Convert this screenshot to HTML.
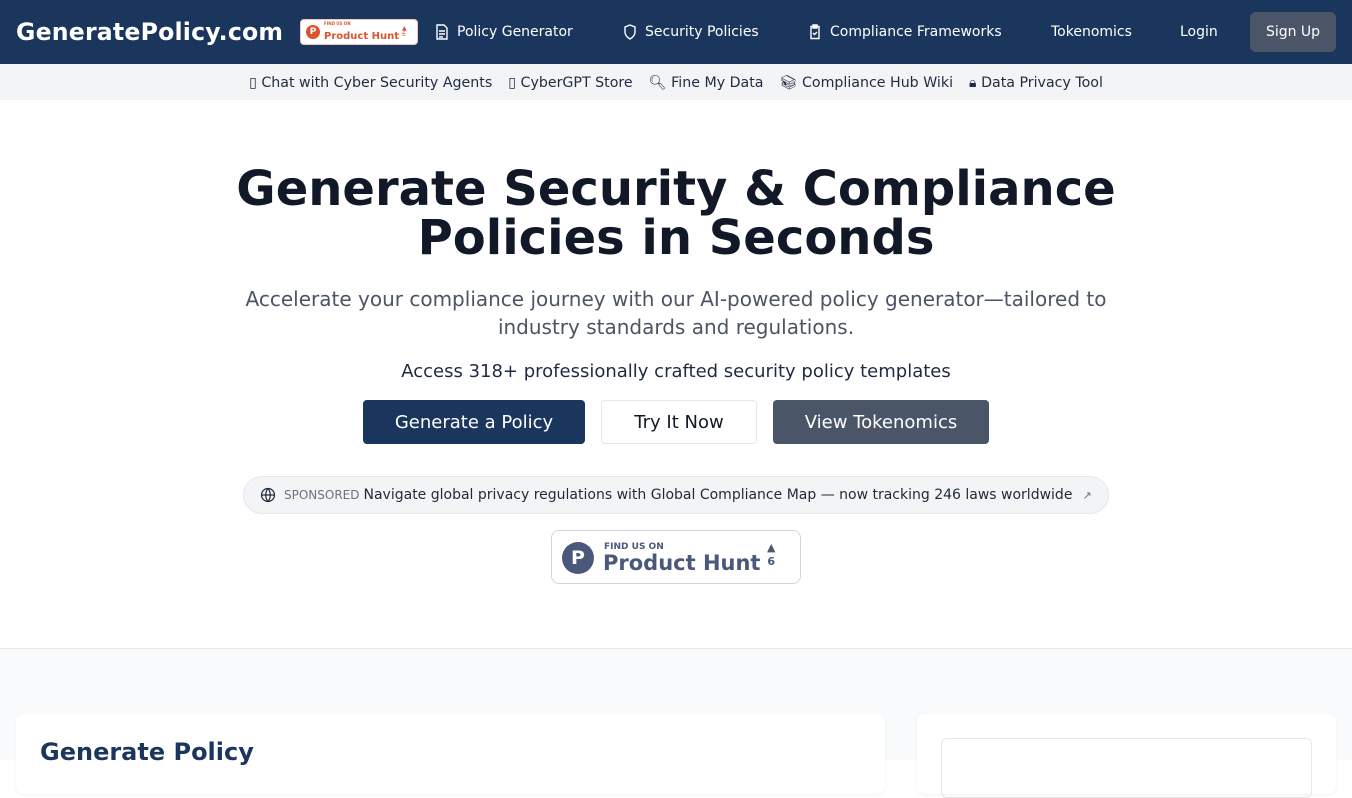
<!DOCTYPE html>
<html><head><meta charset="utf-8"><style>
*{box-sizing:border-box;margin:0;padding:0}
body{width:1352px;height:760px;overflow:hidden;font-family:"DejaVu Sans","Liberation Sans",sans-serif;background:#fff;color:#111827}
.nav{height:64px;background:#1b365d;display:flex;align-items:center;padding:0 16px;color:#fff;position:relative}
.logo{font-weight:bold;font-size:23.6px;letter-spacing:0.2px}
.phs{position:absolute;left:300px;top:19px;width:118px;height:26px;background:#fff;border:1px solid #f2c6bd;border-radius:4px;display:flex;align-items:center;padding-left:5px}
.phs .c{width:14px;height:14px;border-radius:50%;background:#da552f;color:#fff;font-size:9px;font-weight:bold;text-align:center;line-height:14px}
.phs .t{margin-left:4px;color:#da552f;line-height:1}
.phs .t small{display:block;font-size:4px;font-weight:bold}
.phs .t b{font-size:10px}
.ni{position:absolute;top:24px;font-size:14px;color:#fff;display:flex;align-items:center;gap:8px}
.signup{position:absolute;left:1250px;top:12px;width:86px;height:40px;background:#4a5568;border-radius:6px;font-size:14px;display:flex;align-items:center;justify-content:center}
.sub{height:36px;background:#f3f4f6;display:flex;justify-content:center;align-items:center;gap:16px;font-size:14.2px;color:#1f2a44;padding-top:2px}
.sub span{display:flex;align-items:center;gap:4px}
h1{text-align:center;font-size:48px;font-weight:bold;line-height:49px;margin-top:65px;color:#111827}
.lead{text-align:center;font-size:20px;color:#4b5563;line-height:28px;margin:22px auto 0;width:880px}
.acc{text-align:center;font-size:18px;color:#1f2a44;margin-top:20px}
.b{position:absolute;top:400px;height:44px;font-size:18px;display:flex;align-items:center;justify-content:center;border-radius:4px}
.spon{position:absolute;left:243px;top:476px;width:866px;height:38px;border:1px solid #e5e7eb;background:#f3f4f6;border-radius:19px;display:flex;align-items:center;padding-left:16px;font-size:14px;color:#1f2937}
.ph{position:absolute;left:551px;top:530px;width:250px;height:54px;border:1px solid #d1d5db;border-radius:8px;background:#fff}
.sec{position:absolute;top:648px;left:0;width:1352px;height:112px;background:#f8fafc;border-top:1px solid #e5e7eb}
.card{position:absolute;background:#fff;border-radius:8px;box-shadow:0 1px 3px rgba(0,0,0,.06)}
</style></head><body>
<div class="nav">
<div class="logo">GeneratePolicy.com</div>
<div class="phs"><div class="c">P</div><div class="t"><small>FIND US ON</small><b>Product Hunt</b></div><div style="font-size:6px;color:#da552f;margin-left:3px;line-height:6px">▲<br>6</div></div>
<div class="ni" style="left:435px"><svg width="14" height="16" viewBox="0 0 14 16" fill="none" stroke="#fff" stroke-width="1.4"><path d="M2 1h7l3 3v11H2z M4 7h6 M4 10h6 M4 13h4"/></svg>Policy Generator</div>
<div class="ni" style="left:623px"><svg width="14" height="16" viewBox="0 0 14 16" fill="none" stroke="#fff" stroke-width="1.4"><path d="M7 1l5 2v5c0 3-2.5 5.5-5 7-2.5-1.5-5-4-5-7V3z"/></svg>Security Policies</div>
<div class="ni" style="left:808px"><svg width="14" height="16" viewBox="0 0 14 16" fill="none" stroke="#fff" stroke-width="1.4"><path d="M3 2.5h8v12H3z M5 1h4v3H5z M5 9l1.5 1.5L9 8"/></svg>Compliance Frameworks</div>
<div class="ni" style="left:1051px">Tokenomics</div>
<div class="ni" style="left:1180px">Login</div>
<div class="signup">Sign Up</div>
</div>
<div class="sub">
<span>▯ Chat with Cyber Security Agents</span><span>▯ CyberGPT Store</span><span>🔍&#xFE0E; Fine My Data</span><span>📚&#xFE0E; Compliance Hub Wiki</span><span>🔒&#xFE0E; Data Privacy Tool</span>
</div>
<h1>Generate Security &amp; Compliance<br>Policies in Seconds</h1>
<div class="lead">Accelerate your compliance journey with our AI-powered policy generator—tailored to industry standards and regulations.</div>
<div class="acc">Access 318+ professionally crafted security policy templates</div>
<div class="b" style="left:363px;width:222px;background:#1b365d;color:#fff">Generate a Policy</div>
<div class="b" style="left:601px;width:156px;border:1px solid #e5e7eb;color:#111827">Try It Now</div>
<div class="b" style="left:773px;width:216px;background:#4a5568;color:#fff">View Tokenomics</div>
<div class="spon"><svg width="16" height="16" viewBox="0 0 16 16" fill="none" stroke="#1f2937" stroke-width="1.2"><circle cx="8" cy="8" r="6.5"/><path d="M1.5 8h13 M8 1.5c-3 3.5-3 9.5 0 13 M8 1.5c3 3.5 3 9.5 0 13"/></svg><span style="font-size:12px;color:#6b7280;margin:0 4px 0 8px">SPONSORED</span>Navigate global privacy regulations with Global Compliance Map — now tracking 246 laws worldwide<span style="font-size:11px;color:#6b7280;margin-left:10px">↗</span></div>
<div class="ph">
<div style="position:absolute;left:10px;top:11px;width:32px;height:32px;border-radius:50%;background:#4b587c;color:#fff;font-weight:bold;font-size:19px;text-align:center;line-height:32px">P</div>
<div style="position:absolute;left:52px;top:11px;color:#4b587c;font-weight:bold;font-size:9px">FIND US ON</div>
<div style="position:absolute;left:51px;top:20px;color:#4b587c;font-weight:bold;font-size:21px">Product Hunt</div>
<div style="position:absolute;left:215px;top:10px;color:#4b587c;font-size:11px;font-weight:bold;text-align:center;line-height:14px">▲<br>6</div>
</div>
<div class="sec">
<div class="card" style="left:16px;top:65px;width:869px;height:80px"><div style="position:absolute;left:24px;top:24px;font-size:24px;font-weight:bold;color:#1b365d">Generate Policy</div></div>
<div class="card" style="left:917px;top:65px;width:419px;height:80px"><div style="position:absolute;left:24px;top:24px;width:371px;height:60px;border:1px solid #e5e7eb;border-radius:6px"></div></div>
</div>
</body></html>
